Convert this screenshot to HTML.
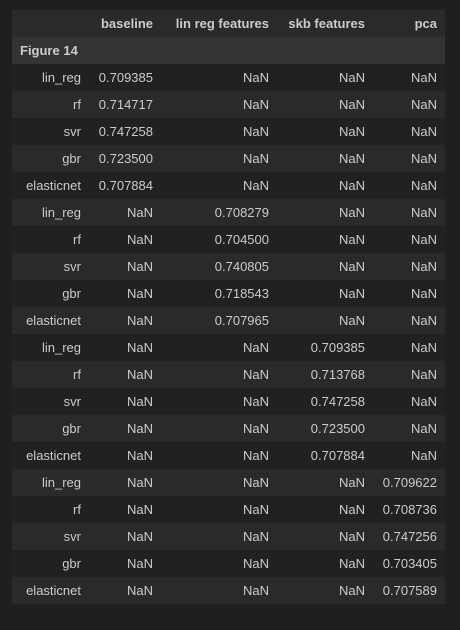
<!DOCTYPE html><html><head><style>
body{margin:0;background:#1f1f1f;width:460px;height:630px;overflow:hidden;font-family:"Liberation Sans",sans-serif;font-size:13px;color:#cccccc}
table{position:absolute;left:12px;top:10px;border-collapse:collapse;table-layout:fixed;width:433px}
td,th{height:27px;padding:0 8px 0 0;text-align:right;white-space:nowrap;box-sizing:border-box;line-height:27px}
th{font-weight:bold}
tr.h{background:#2a2a2a}
tr.f{background:#333333}
tr.f th{text-align:left;padding-left:8px}
tr.e{background:#2a2a2a}
tr.o{background:#212121}
</style></head><body>
<table>
<colgroup><col style="width:77px"><col style="width:72px"><col style="width:116px"><col style="width:96px"><col style="width:72px"></colgroup>
<tr class="h"><th></th><th>baseline</th><th>lin reg features</th><th>skb features</th><th>pca</th></tr>
<tr class="f"><th colspan="5">Figure 14</th></tr>
<tr class="o"><td>lin_reg</td><td>0.709385</td><td>NaN</td><td>NaN</td><td>NaN</td></tr>
<tr class="e"><td>rf</td><td>0.714717</td><td>NaN</td><td>NaN</td><td>NaN</td></tr>
<tr class="o"><td>svr</td><td>0.747258</td><td>NaN</td><td>NaN</td><td>NaN</td></tr>
<tr class="e"><td>gbr</td><td>0.723500</td><td>NaN</td><td>NaN</td><td>NaN</td></tr>
<tr class="o"><td>elasticnet</td><td>0.707884</td><td>NaN</td><td>NaN</td><td>NaN</td></tr>
<tr class="e"><td>lin_reg</td><td>NaN</td><td>0.708279</td><td>NaN</td><td>NaN</td></tr>
<tr class="o"><td>rf</td><td>NaN</td><td>0.704500</td><td>NaN</td><td>NaN</td></tr>
<tr class="e"><td>svr</td><td>NaN</td><td>0.740805</td><td>NaN</td><td>NaN</td></tr>
<tr class="o"><td>gbr</td><td>NaN</td><td>0.718543</td><td>NaN</td><td>NaN</td></tr>
<tr class="e"><td>elasticnet</td><td>NaN</td><td>0.707965</td><td>NaN</td><td>NaN</td></tr>
<tr class="o"><td>lin_reg</td><td>NaN</td><td>NaN</td><td>0.709385</td><td>NaN</td></tr>
<tr class="e"><td>rf</td><td>NaN</td><td>NaN</td><td>0.713768</td><td>NaN</td></tr>
<tr class="o"><td>svr</td><td>NaN</td><td>NaN</td><td>0.747258</td><td>NaN</td></tr>
<tr class="e"><td>gbr</td><td>NaN</td><td>NaN</td><td>0.723500</td><td>NaN</td></tr>
<tr class="o"><td>elasticnet</td><td>NaN</td><td>NaN</td><td>0.707884</td><td>NaN</td></tr>
<tr class="e"><td>lin_reg</td><td>NaN</td><td>NaN</td><td>NaN</td><td>0.709622</td></tr>
<tr class="o"><td>rf</td><td>NaN</td><td>NaN</td><td>NaN</td><td>0.708736</td></tr>
<tr class="e"><td>svr</td><td>NaN</td><td>NaN</td><td>NaN</td><td>0.747256</td></tr>
<tr class="o"><td>gbr</td><td>NaN</td><td>NaN</td><td>NaN</td><td>0.703405</td></tr>
<tr class="e"><td>elasticnet</td><td>NaN</td><td>NaN</td><td>NaN</td><td>0.707589</td></tr>
</table>
</body></html>
